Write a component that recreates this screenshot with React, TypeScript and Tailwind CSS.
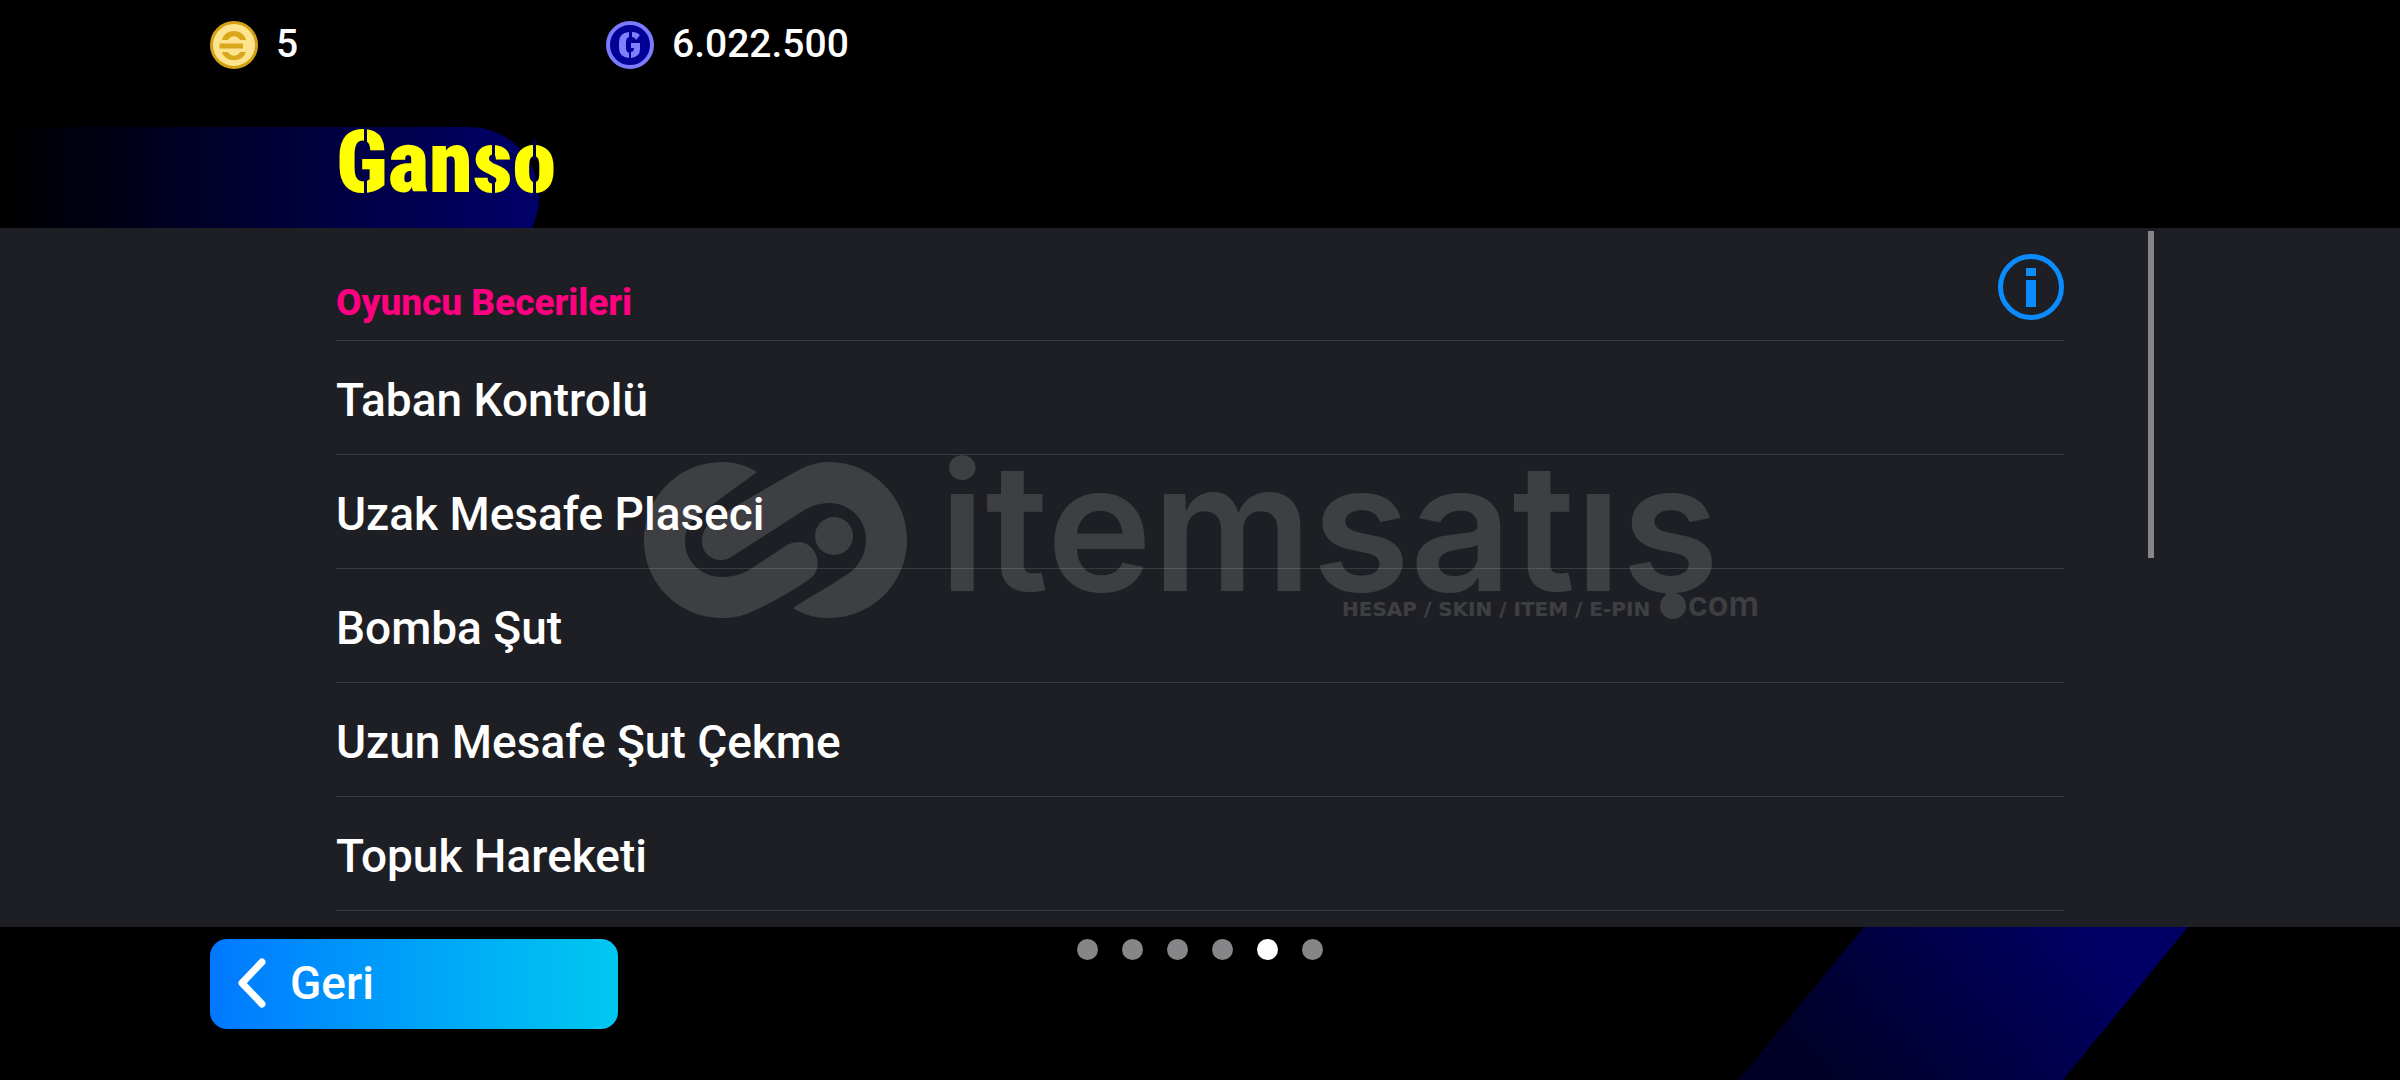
const skills = [
  'Taban Kontrolü',
  'Uzak Mesafe Plaseci',
  'Bomba Şut',
  'Uzun Mesafe Şut Çekme',
  'Topuk Hareketi',
];

const pages = [1, 2, 3, 4, 5, 6];
const activePage = 5;

function GoldCoin() {
  return (
    <svg viewBox="0 0 48 48" className="size-12 shrink-0" aria-hidden="true">
      <circle cx="24" cy="24" r="22.500" fill="#ffe48f" stroke="#d4a017" strokeWidth="3" />
      <path d="M12 19C15 7 33 7 36 19H30C27 14 21 14 18 19ZM12 31C15 42 33 42 36 31H30C27 36 21 36 18 31Z" fill="#d9a71c" />
      <path d="M9.500 22.500H33V27.500H9.500Z" fill="#d9a71c" />
    </svg>
  );
}

function GpCoin() {
  return (
    <svg viewBox="0 0 48 48" className="size-12 shrink-0" aria-hidden="true">
      <circle cx="24" cy="24" r="22" fill="#000096" stroke="#7b7bff" strokeWidth="4" />
      <path
        d="M23 11v5q-3 1-3 5v6q0 4 3 5v5q-10-1-10-10v-6q0-9 10-10zM26 11q5 0 8 3l-4 5q-1-3-4-3zM25 22h9v6q0 8-9 9v-6q3 0 3-4h-3z"
        fill="#8080ff"
      />
    </svg>
  );
}

function Watermark() {
  return (
    <div className="pointer-events-none absolute inset-0 flex items-center justify-center">
      <svg width="1114" height="158" viewBox="0 0 1114 158" className="overflow-visible opacity-14" fill="#fff">
        {/* the dot of ".com" stands in for the cedilla */}
        <clipPath id="wordmark">
          <path d="M290-10h824v144H290z" />
        </clipPath>
        <path d="M114 11C103 4 91 1 79 1C36 1 1 36 1 80C1 122 36 157 79 157C90 157 98 155 106 152C122 145 149 131 168 117C176 110 175 101 174 97C171 86 163 81 156 81C150 81 145 83 141 86L106 109C97 114 88 116 79 116C58 116 42 100 42 81C42 70 46 60 55 54Z" />
        <path d="M70 59C62 65 59 73 59 81C59 91 67 99 78 99C82 99 85 98 88 96L163 48C170 44 178 42 186 42C206 42 223 58 223 78C223 92 217 103 209 110C199 118 170 134 150 147C161 154 173 157 186 157C229 157 264 122 264 79C264 36 229 1 186 1C177 1 169 3 162 6C140 17 105 38 70 59Z" />
        <circle cx="191" cy="75" r="19" />
        <text x="296" y="130" clipPath="url(#wordmark)" className="font-['Inter',sans-serif] text-[178px] font-semibold">
          itemsatış
        </text>
        <text x="699" y="155" className="font-['DejaVu_Sans',sans-serif] text-[20px] font-bold">
          HESAP / SKIN / ITEM / E-PIN
        </text>
        <circle cx="1030" cy="145" r="13" />
        <text x="1045" y="155" className="font-['Inter',sans-serif] text-[34px] font-semibold">com</text>
      </svg>
    </div>
  );
}

export default function App() {
  return (
    <div className="relative flex min-h-screen flex-col overflow-hidden bg-black font-['Roboto',sans-serif] font-medium text-white">
      <header>
        <div className="flex h-[127px] items-start px-[8.75%] pt-5">
          <div className="flex w-[396px] items-center gap-[18px]">
            <GoldCoin />
            <span className="pb-0.5 text-[39px] leading-12">5</span>
          </div>
          <div className="flex items-center gap-[18px]">
            <GpCoin />
            <span className="pb-0.5 text-[39px] leading-12">6.022.500</span>
          </div>
        </div>
        <div className="relative h-[101px] pl-[14%]">
          <div className="absolute inset-0 overflow-hidden">
            <div className="h-[140px] w-[539px] rounded-r-[70px] bg-linear-to-r/srgb from-black to-[#00006a]" />
          </div>
          <h1 className="relative text-[88px] leading-[70px] font-black text-[#ffff00] font-['Roboto_Condensed',sans-serif]">
            Ganso
            {/* stencil cuts */}
            <svg viewBox="0 0 220 70" className="absolute top-0 left-0 h-[70px] w-[220px]" fill="#000055" aria-hidden="true">
              <path d="M28 0h3v21h-3zM28 49h3v21h-3zM156 13h3v17h-3zM156 51h3v19h-3zM197 13h3v20h-3zM197 49h3v21h-3z" />
            </svg>
          </h1>
        </div>
      </header>

      <main className="relative flex-1 bg-[#1e1f24] px-[14%] pb-4">
        <div className="flex h-[113px] items-start justify-between border-b border-[#3a3b40]">
          <h2 className="pt-[51px] text-[37px] leading-12 font-extrabold text-[#ff0080]">Oyuncu Becerileri</h2>
          <button type="button" aria-label="Bilgi" className="mt-[26px]">
            <svg viewBox="0 0 66 66" className="size-[66px]" aria-hidden="true">
              <circle cx="33" cy="33" r="30.500" fill="none" stroke="#0a8cff" strokeWidth="5" />
              <path d="M28 14h10v8H28zM28 26h10v27H28z" fill="#0a8cff" />
            </svg>
          </button>
        </div>
        <ul>
          {skills.map((skill) => (
            <li key={skill} className="flex h-[114px] items-center border-b border-[#3a3b40] pt-1.5 text-[46px]">
              {skill}
            </li>
          ))}
        </ul>
        <div className="absolute top-[3px] right-[10.25%] h-[327px] w-1.5 bg-[#868588]" />
      </main>

      <footer className="relative grid h-[153px] grid-cols-3 items-start px-[8.75%] pt-3">
        <svg viewBox="0 0 450 153" className="absolute top-0 right-[8.83%] h-full w-[450px]" aria-hidden="true">
          <defs>
            <linearGradient id="stripe" gradientUnits="userSpaceOnUse" x1="110" y1="190" x2="330" y2="-10">
              <stop offset="0" stopColor="#000024" />
              <stop offset="1" stopColor="#000064" />
            </linearGradient>
          </defs>
          <path d="M126 0h324L325 153H0z" fill="url(#stripe)" />
        </svg>
        <button
          type="button"
          className="flex h-[90px] w-[408px] items-center gap-6 rounded-[17px] bg-linear-to-r from-[#0078ff] to-[#00c8f0] pb-0.5 pl-7 text-[46px]"
        >
          <svg viewBox="0 0 28 50" className="h-[50px] w-7" fill="none" stroke="#fff" strokeWidth="7" strokeLinecap="round" strokeLinejoin="round" aria-hidden="true">
            <path d="M24 4L4 25l20 21" />
          </svg>
          Geri
        </button>
        <nav className="flex justify-center gap-6" aria-label="Sayfalar">
          {pages.map((page) => (
            <button
              key={page}
              type="button"
              aria-label={`Sayfa ${page}`}
              className={page === activePage ? 'size-[21px] rounded-full bg-white' : 'size-[21px] rounded-full bg-[#868588]'}
            />
          ))}
        </nav>
      </footer>

      <Watermark />
    </div>
  );
}
